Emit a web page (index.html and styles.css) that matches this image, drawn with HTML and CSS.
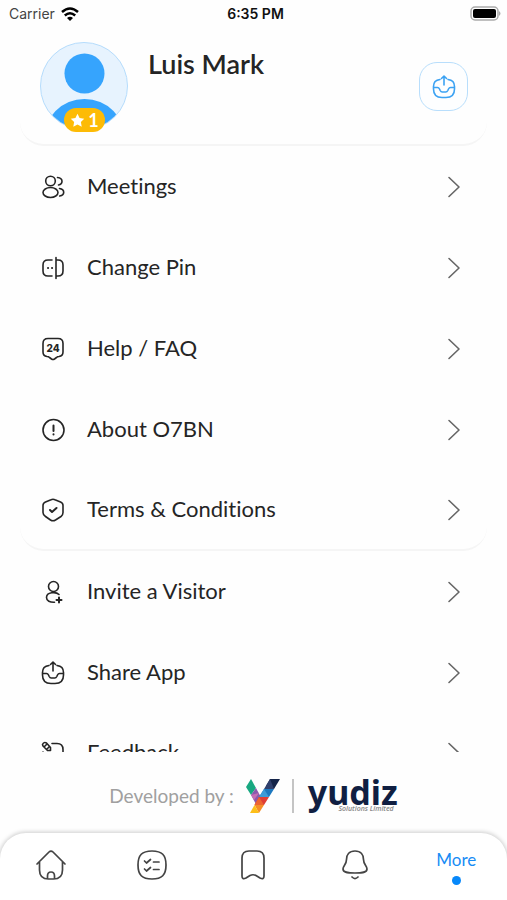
FILE: index.html
```html
<!DOCTYPE html>
<html lang="en">
<head>
<meta charset="utf-8">
<meta name="viewport" content="width=device-width, initial-scale=1">
<title>More</title>
<link rel="stylesheet" href="styles.css">
</head>
<body>
<svg class="defs" aria-hidden="true">
  <symbol id="chevron" viewBox="0 0 24 24"><path d="M7 2.500L17 12L7 21.500"/></symbol>
  <symbol id="tray" viewBox="0 0 24 24"><path d="M8 4.500C3.500 5 1.500 7 1.500 11.500V14c0 6 2.500 8.500 8.500 8.500h4c6 0 8.500-2.500 8.500-8.500v-2.500c0-4.500-2-6.500-6.500-7M12 10V1.500M9.500 3.500L12 1l2.500 2.500M1.500 12.500h4c1 0 1.500.5 2 1.500l.7 1.500c.5 1 1 1.500 2 1.500h3.600c1 0 1.500-.5 2-1.500l.7-1.500c.5-1 1-1.500 2-1.500h4"/></symbol>
</svg>
<header class="status">
  <span class="carrier">Carrier
    <svg class="wifi" viewBox="0 0 18 14" aria-hidden="true"><path d="M1 5Q9-2 17 5M3.800 8.500Q9 4 14.200 8.500"/><path class="fill" d="M6 11Q9 8.500 12 11L9 14z"/></svg>
  </span>
  <time>6:35 PM</time>
  <svg class="battery" viewBox="0 0 32 16" aria-hidden="true"><rect class="shell" x="1" y="1" width="27" height="13" rx="4"/><rect x="3" y="3" width="23" height="9" rx="2"/><path class="cap" d="M29 5q3 2.500 0 5z"/></svg>
</header>

<section class="card profile">
  <div class="avatar">
    <svg viewBox="0 0 88 88" aria-hidden="true">
      <clipPath id="face"><circle cx="44" cy="44" r="43"/></clipPath>
      <circle class="ring" cx="44" cy="44" r="43.500"/>
      <g class="person" clip-path="url(#face)"><circle cx="44.500" cy="31.500" r="20"/><circle cx="44.500" cy="98" r="41"/></g>
    </svg>
    <span class="badge"><svg viewBox="0 0 16 16" aria-hidden="true"><path d="M8 .8l2.200 4.600 5 .7-3.600 3.500.9 5L8 12.200l-4.500 2.400.9-5L.8 6.100l5-.7z"/></svg>1</span>
  </div>
  <h1>Luis Mark</h1>
  <button class="share" type="button" aria-label="Share profile"><svg class="icon" aria-hidden="true"><use href="#tray"/></svg></button>
</section>

<main class="menu">
  <nav class="card group" aria-label="Account">
    <a class="row" href="#"><svg class="icon" viewBox="0 0 24 24" aria-hidden="true"><circle cx="9.500" cy="6" r="4.800"/><ellipse cx="9.500" cy="17.500" rx="7.500" ry="5"/><path d="M16.500 2.500c2.600.3 4.500 1.700 4.500 3.800s-1.400 3.400-3.500 3.700M18.500 13.500c2.700.4 4.200 1.900 4.200 3.800 0 2-1.500 3.300-4 3.700"/></svg><span>Meetings</span><svg class="chevron" aria-hidden="true"><use href="#chevron"/></svg></a>
    <a class="row" href="#"><svg class="icon" viewBox="0 0 24 24" aria-hidden="true"><path d="M11 4H7Q2 4 2 9v6q0 5 5 5h4M15 1.500v21M15 4h2q5 0 5 5v6q0 5-5 5h-2"/><path class="heavy" d="M7 12h.1M11 12h.1"/></svg><span>Change Pin</span><svg class="chevron" aria-hidden="true"><use href="#chevron"/></svg></a>
    <a class="row" href="#"><svg class="icon" viewBox="0 0 24 24" aria-hidden="true"><path d="M7 1.500h10q5 0 5 5V15q0 4-4 4.500-1.500 0-2.500 1l-2 1.500q-1.500 1-3 0l-2-1.500q-1-1-2.500-1-4-.5-4-4.500V6.500q0-5 5-5z"/><text x="12" y="14.500">24</text></svg><span>Help / FAQ</span><svg class="chevron" aria-hidden="true"><use href="#chevron"/></svg></a>
    <a class="row" href="#"><svg class="icon" viewBox="0 0 24 24" aria-hidden="true"><circle cx="12.500" cy="12" r="10.500"/><path class="heavy" d="M12.500 7.500V13M12.500 16.300v.1"/></svg><span>About O7BN</span><svg class="chevron" aria-hidden="true"><use href="#chevron"/></svg></a>
    <a class="row" href="#"><svg class="icon" viewBox="0 0 24 24" aria-hidden="true"><path d="M10 1.800q2-1 4 0L19.500 4q2.500 1 2.500 3.500v7q0 2.500-2 4L14.500 22q-2.500 1.500-5 0L4.500 18.500q-2.500-1.500-2.500-4v-7Q2 5 4.500 4z"/><path class="heavy" d="M9 12l2 2 4.500-4"/></svg><span>Terms &amp; Conditions</span><svg class="chevron" aria-hidden="true"><use href="#chevron"/></svg></a>
  </nav>
  <nav class="card group" aria-label="Application">
    <a class="row" href="#"><svg class="icon" viewBox="0 0 24 24" aria-hidden="true"><circle cx="12.500" cy="6.500" r="5"/><path d="M18 14.500c-3-3-12.500-2.500-12.500 3 0 3.500 3.500 5 8 4.800"/><path class="heavy" d="M18 17.500v5M15.500 20h5"/></svg><span>Invite a Visitor</span><svg class="chevron" aria-hidden="true"><use href="#chevron"/></svg></a>
    <a class="row" href="#"><svg class="icon" aria-hidden="true"><use href="#tray"/></svg><span>Share App</span><svg class="chevron" aria-hidden="true"><use href="#chevron"/></svg></a>
    <a class="row" href="#"><svg class="icon" viewBox="0 0 24 24" aria-hidden="true"><path d="M11 2.500h5q6 0 6 6v7q0 6-6 6H8q-6 0-6-6V11M1.500 3.500Q3 .5 5.500 2L9.500 6.500V9.500H6.500L2 5zM3.500 5.500l2.500-2.500M6 8l2.500-2.500"/></svg><span>Feedback</span><svg class="chevron" aria-hidden="true"><use href="#chevron"/></svg></a>
  </nav>
</main>

<footer class="credit">
  <span>Developed by :</span>
  <svg class="mark" viewBox="0 0 36 36" aria-hidden="true">
    <path fill="#18a881" d="M1 9L6 1l5 9-5 7z"/><path fill="#8b58ad" d="M6 17l5-7 6 11-5 7z"/><path fill="#c46db4" d="M6 17l8-2-5 7z"/>
    <path fill="#142449" d="M25 1h10l-6 10-8-3z"/><path fill="#30406d" d="M25 1l4 10H19z"/><path fill="#1d78bf" d="M19 11h10l-5 8h-10z"/><path fill="#3c9bd7" d="M19 11l5 8H14z"/><path fill="#df3e35" d="M14 19h10l-5 8H9.500z"/><path fill="#ed6430" d="M14 19l5 8H9.500z"/><path fill="#f58d27" d="M9.500 27H19l-5 8z"/><path fill="#fdbf18" d="M9.500 27l4.500 8H5z"/>
  </svg>
  <span class="brand"><b>yudiz</b><small>Solutions Limited</small></span>
</footer>

<nav class="tabs" aria-label="Main">
  <a href="#" aria-label="Home"><svg viewBox="0 0 32 32" aria-hidden="true"><path d="M2 15L14 3q2-2 4 0l12 12M4.500 13v8q0 9 9 9h5q9 0 9-9v-8M12.500 30v-3q0-4 3.500-4t3.500 4v3"/></svg></a>
  <a href="#" aria-label="Tasks"><svg viewBox="0 0 32 32" aria-hidden="true"><path d="M16 2c10 0 14 4 14 14s-4 14-14 14S2 26 2 16 6 2 16 2zM8.500 12l2 2 4-3.500M8.500 20l2 2 4-3.500M17.500 13H23M17.500 20.500H23"/></svg></a>
  <a href="#" aria-label="Saved"><svg viewBox="0 0 32 32" aria-hidden="true"><path d="M12 2h8q7 0 7 7v18q0 4-4 2l-4-2.500q-3-1.500-6 0L9 29q-4 2-4-2V9q0-7 7-7z"/></svg></a>
  <a href="#" aria-label="Notifications"><svg viewBox="0 0 32 32" aria-hidden="true"><path d="M16 2c-6 0-8.500 4-8.500 8.500 0 5-3.500 6-3.500 9.500 0 3 3 4 12 4s12-1 12-4c0-3.500-3.500-4.500-3.500-9.500C24.500 6 22 2 16 2zM13 28q3 3 6 0"/></svg></a>
  <a class="active" href="#" aria-current="page">More</a>
</nav>
</body>
</html>
```
FILE: styles.css
```css
* { box-sizing: border-box; }
body {
  margin: 0;
  height: 100vh;
  display: flex;
  flex-direction: column;
  background: #fefefe;
  color: #252525;
  font-family: Lato, "Liberation Sans", sans-serif;
  font-variant-ligatures: none;
}
a { color: inherit; text-decoration: none; }
svg { display: block; flex: none; }
.defs { position: absolute; width: 0; height: 0; }

.status {
  flex: none;
  height: 28px;
  padding: 0 5px 0 9px;
  display: grid;
  grid-template-columns: 1fr auto 1fr;
  align-items: center;
  font: 14px/28px Inter, sans-serif;
}
.carrier { display: flex; align-items: center; gap: 6px; color: #444; }
.wifi { width: 18px; height: 14px; fill: none; stroke: #000; stroke-width: 2.5; }
.wifi .fill { fill: #000; stroke: none; }
.status time { color: #111; font-weight: 600; }
.battery { width: 32px; height: 16px; justify-self: end; }
.battery .shell { fill: #fff; stroke: #aaa; stroke-width: 1.5; }
.battery .cap { fill: #aaa; }

.card {
  flex: none;
  margin: 0 20px;
  border-bottom: 2px solid #f5f5f5;
  border-radius: 0 0 24px 24px;
}
.profile {
  height: 118px;
  padding: 14px 19px 0 20px;
  display: flex;
  align-items: flex-start;
  gap: 20px;
}
.avatar { position: relative; width: 88px; height: 88px; }
.avatar > svg { width: 88px; height: 88px; }
.ring { fill: #e7f3fe; stroke: #b5dcfc; stroke-width: 1; }
.person { fill: #36a4fd; }
.badge {
  position: absolute;
  left: 24px;
  bottom: -2px;
  width: 41px;
  height: 24px;
  border-radius: 12px;
  display: flex;
  align-items: center;
  justify-content: center;
  gap: 3px;
  background: #fdbb06;
  color: #fff;
  font-size: 18px;
  font-weight: 700;
}
.badge svg { width: 15px; height: 15px; fill: #fff; }
h1 { flex: 1; margin: 6px 0 0; font-size: 27px; line-height: 32px; font-weight: 600; }
.share {
  width: 49px;
  height: 49px;
  margin-top: 20px;
  padding: 0;
  display: grid;
  place-items: center;
  border: 1px solid #b8defc;
  border-radius: 18px;
  background: #fdfeff;
  color: #3ba2f3;
}

.menu { flex: 1; min-height: 0; overflow: hidden; }
.group .row:last-child { height: 79px; }
.row {
  height: 81px;
  padding: 0 21px;
  display: flex;
  align-items: center;
  font-size: 22px;
  line-height: 28px;
}
.row span { flex: 1; margin: 0 0 2px 22px; }
.icon, .chevron {
  width: 24px;
  height: 24px;
  fill: none;
  stroke: currentColor;
  stroke-width: 1.6;
  stroke-linecap: round;
  stroke-linejoin: round;
}
.chevron { color: #666; }
.icon .heavy { stroke-width: 2; }
.icon text { fill: currentColor; stroke: none; font: 800 10px Inter, sans-serif; text-anchor: middle; }

.credit {
  flex: none;
  height: 81px;
  padding-top: 6px;
  display: flex;
  align-items: center;
  justify-content: center;
  gap: 11px;
  color: #a0a0a0;
  font-size: 19px;
}
.mark { width: 36px; height: 36px; }
.brand {
  display: flex;
  flex-direction: column;
  padding-left: 14px;
  border-left: 2px solid #c4c4c4;
  color: #101f42;
}
.brand b { font: 700 34px/26px "Noto Sans", sans-serif; }
.brand small { align-self: flex-end; margin-right: 4px; color: #888; font: italic 600 7px/8px "Open Sans", sans-serif; }

.tabs {
  flex: none;
  height: 67px;
  padding-bottom: 4px;
  display: grid;
  grid-template-columns: repeat(5, 1fr);
  align-items: center;
  justify-items: center;
  border-radius: 26px 26px 0 0;
  background: #fff;
  box-shadow: 0 0 4px 1px #ccc;
}
.tabs svg { width: 32px; height: 32px; fill: none; stroke: #444; stroke-width: 1.7; stroke-linecap: round; stroke-linejoin: round; }
.tabs .active {
  display: flex;
  flex-direction: column;
  align-items: center;
  gap: 5px;
  padding-top: 4px;
  color: #188cf5;
  font-size: 17px;
  line-height: 22px;
}
.active::after { content: ""; width: 9px; height: 9px; border-radius: 50%; background: #0788fa; }
```
